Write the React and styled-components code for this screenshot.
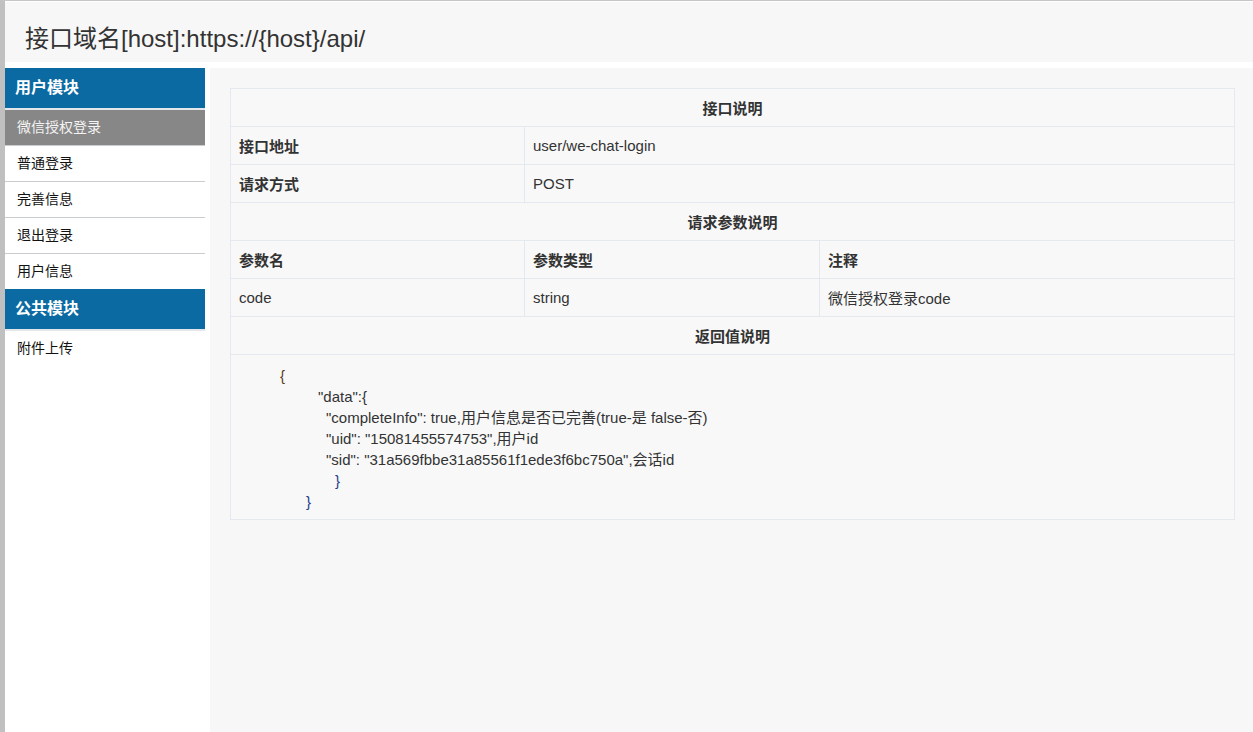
import React from "react";
import styled, { createGlobalStyle } from "styled-components";

const Global = createGlobalStyle`
  html, body { margin: 0; padding: 0; background: #ffffff; }
  body {
    font-family: "Liberation Sans", Arial, "Noto Sans CJK SC", sans-serif;
    color: #333;
  }
  * { box-sizing: border-box; }
`;

const Page = styled.div`
  min-height: 100vh;
  border-left: 5px solid #c0c0c0;
  border-top: 1px solid #c6c6c6;
  padding-top: 1px;
  display: flex;
  flex-direction: column;
  background: #fff;
`;

const Header = styled.header`
  height: 60px;
  background: #f7f7f7;
  padding: 23px 20px 0;
  flex-shrink: 0;
`;

const Title = styled.h1`
  margin: 0;
  font-size: 24px;
  line-height: 28px;
  font-weight: normal;
  color: #333;
`;

const Main = styled.div`
  margin-top: 6px;
  flex: 1;
  display: flex;
  align-items: stretch;
`;

const Sidebar = styled.nav`
  width: 205px;
  flex-shrink: 0;
  background: #fff;
`;

const Group = styled.div`
  width: 200px;
`;

const GroupTitle = styled.div`
  height: 42px;
  line-height: 40px;
  background: #0b6aa2;
  color: #fff;
  font-size: 16px;
  font-weight: bold;
  padding-left: 10px;
  border-bottom: 2px solid #e4e7ea;
`;

const Item = styled.div`
  height: 36px;
  line-height: 35px;
  padding-left: 12px;
  font-size: 14px;
  color: ${(p) => (p.$active ? "#f4f4f4" : "#111")};
  background: ${(p) => (p.$active ? "#878787" : "#fff")};
  border-bottom: 1px solid #c9cdd0;
  &:last-child {
    border-bottom: none;
    height: 35px;
  }
`;

const Content = styled.main`
  flex: 1;
  background: #f7f7f7;
  padding: 20px 18px 20px 20px;
`;

const Table = styled.table`
  width: 100%;
  table-layout: fixed;
  border-collapse: collapse;
  background: #f8f8f9;
  font-size: 15px;
  color: #333;
`;

const Cell = styled.td`
  height: 38px;
  padding: 0 8px;
  border: 1px solid #e4e9ef;
  text-align: ${(p) => (p.$center ? "center" : "left")};
  font-weight: ${(p) => (p.$bold ? "bold" : "normal")};
  vertical-align: middle;
  white-space: nowrap;
`;

const CodeCell = styled.td`
  border: 1px solid #e4e9ef;
  padding: 10px 8px 7px;
  vertical-align: top;
`;

const CodeLine = styled.div`
  height: 21px;
  line-height: 21px;
  padding-left: ${(p) => p.$indent}px;
  color: ${(p) => p.$color || "#333"};
  white-space: pre;
`;

const menu = [
  {
    title: "用户模块",
    items: ["微信授权登录", "普通登录", "完善信息", "退出登录", "用户信息"],
  },
  { title: "公共模块", items: ["附件上传"] },
];

const code = [
  { indent: 41, text: "{", color: "#5a3e1b" },
  { indent: 79, text: "\"data\":{" },
  { indent: 87, text: "\"completeInfo\": true,用户信息是否已完善(true-是 false-否)" },
  { indent: 87, text: "\"uid\": \"15081455574753\",用户id" },
  { indent: 87, text: "\"sid\": \"31a569fbbe31a85561f1ede3f6bc750a\",会话id" },
  { indent: 96, text: "}", color: "#1d3f8a" },
  { indent: 67, text: "}", color: "#1d3f8a" },
];

export default function App() {
  return (
    <>
      <Global />
      <Page>
        <Header>
          <Title>接口域名[host]:https://{"{host}"}/api/</Title>
        </Header>
        <Main>
          <Sidebar>
            {menu.map((g) => (
              <Group key={g.title}>
                <GroupTitle>{g.title}</GroupTitle>
                {g.items.map((it, i) => (
                  <Item key={it} $active={g.title === "用户模块" && i === 0}>
                    {it}
                  </Item>
                ))}
              </Group>
            ))}
          </Sidebar>
          <Content>
            <Table>
              <colgroup>
                <col style={{ width: "294px" }} />
                <col style={{ width: "295px" }} />
                <col />
              </colgroup>
              <tbody>
                <tr>
                  <Cell colSpan={3} $center $bold>接口说明</Cell>
                </tr>
                <tr>
                  <Cell $bold>接口地址</Cell>
                  <Cell colSpan={2}>user/we-chat-login</Cell>
                </tr>
                <tr>
                  <Cell $bold>请求方式</Cell>
                  <Cell colSpan={2}>POST</Cell>
                </tr>
                <tr>
                  <Cell colSpan={3} $center $bold>请求参数说明</Cell>
                </tr>
                <tr>
                  <Cell $bold>参数名</Cell>
                  <Cell $bold>参数类型</Cell>
                  <Cell $bold>注释</Cell>
                </tr>
                <tr>
                  <Cell>code</Cell>
                  <Cell>string</Cell>
                  <Cell>微信授权登录code</Cell>
                </tr>
                <tr>
                  <Cell colSpan={3} $center $bold>返回值说明</Cell>
                </tr>
                <tr>
                  <CodeCell colSpan={3}>
                    {code.map((l, i) => (
                      <CodeLine key={i} $indent={l.indent} $color={l.color}>
                        {l.text}
                      </CodeLine>
                    ))}
                  </CodeCell>
                </tr>
              </tbody>
            </Table>
          </Content>
        </Main>
      </Page>
    </>
  );
}
